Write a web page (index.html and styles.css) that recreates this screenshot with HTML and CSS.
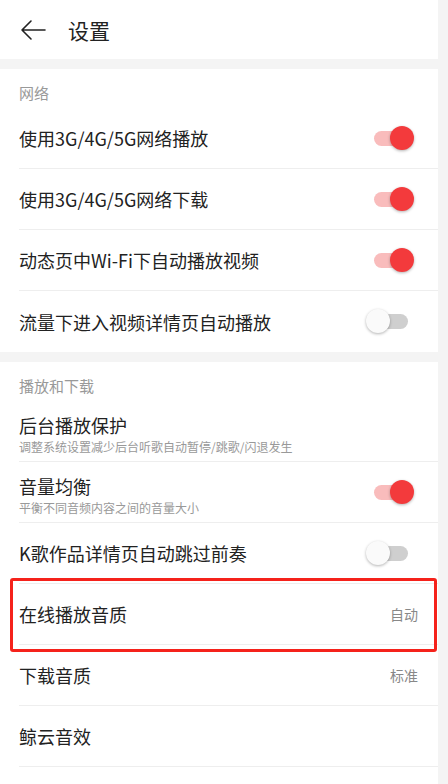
FILE: index.html
```html
<!DOCTYPE html>
<html lang="zh-CN">
<head>
    <meta charset="UTF-8">
    <meta name="viewport" content="width=device-width, initial-scale=1.0">
    <title>设置</title>
    <link rel="stylesheet" href="styles.css">
</head>
<body>
    <div class="page">
        <div class="top-bar">
            <svg class="back-icon" width="28" height="24" viewBox="0 0 28 24">
                <path d="M26 12 H3 M12 3 L3 12 L12 21" fill="none" stroke="#222" stroke-width="1.6" stroke-linecap="round" stroke-linejoin="round"/>
            </svg>
            <div class="title">设置</div>
        </div>

        <div class="section">
            <div class="section-label">网络</div>
            <div class="row">
                <div class="row-title">使用3G/4G/5G网络播放</div>
                <div class="switch on"><span class="knob"></span></div>
            </div>
            <div class="row">
                <div class="row-title">使用3G/4G/5G网络下载</div>
                <div class="switch on"><span class="knob"></span></div>
            </div>
            <div class="row">
                <div class="row-title">动态页中Wi-Fi下自动播放视频</div>
                <div class="switch on"><span class="knob"></span></div>
            </div>
            <div class="row last">
                <div class="row-title">流量下进入视频详情页自动播放</div>
                <div class="switch"><span class="knob"></span></div>
            </div>
        </div>

        <div class="section">
            <div class="section-label">播放和下载</div>
            <div class="row double">
                <div class="row-text">
                    <div class="row-title">后台播放保护</div>
                    <div class="row-sub">调整系统设置减少后台听歌自动暂停/跳歌/闪退发生</div>
                </div>
            </div>
            <div class="row double">
                <div class="row-text">
                    <div class="row-title">音量均衡</div>
                    <div class="row-sub">平衡不同音频内容之间的音量大小</div>
                </div>
                <div class="switch on"><span class="knob"></span></div>
            </div>
            <div class="row">
                <div class="row-title">K歌作品详情页自动跳过前奏</div>
                <div class="switch"><span class="knob"></span></div>
            </div>
            <div class="row marked">
                <div class="row-title">在线播放音质</div>
                <div class="row-value">自动</div>
                <div class="highlight"></div>
            </div>
            <div class="row">
                <div class="row-title">下载音质</div>
                <div class="row-value">标准</div>
            </div>
            <div class="row">
                <div class="row-title">鲸云音效</div>
            </div>
            <div class="row">
                <div class="row-title"></div>
            </div>
        </div>
    </div>
</body>
</html>
```

FILE: styles.css
```css
body {
    margin: 0;
    background-color: #f4f4f4;
    font-family: "Noto Sans CJK SC", "Noto Sans", sans-serif;
    color: #222;
    overflow: hidden;
}

.page {
    width: 438px;
}

.top-bar {
    height: 59px;
    background-color: #fff;
    display: flex;
    align-items: center;
    margin-bottom: 10px;
}

.back-icon {
    margin-left: 19px;
    display: block;
}

.title {
    margin-left: 21px;
    font-size: 21px;
    line-height: 28px;
}

.section {
    background-color: #fff;
    margin-bottom: 10px;
}

.section-label {
    height: 39px;
    box-sizing: border-box;
    padding: 14px 0 0 19px;
    font-size: 15px;
    line-height: 20px;
    color: #999;
}

.row {
    position: relative;
    height: 61px;
    box-sizing: border-box;
    margin-left: 19px;
    padding-right: 20px;
    border-bottom: 1px solid #eeeeee;
    display: flex;
    align-items: center;
    justify-content: space-between;
}

.row.last {
    border-bottom: none;
}

.row.double {
    padding-top: 6px;
}

.row-title {
    font-size: 18px;
    line-height: 22px;
}

.row-sub {
    font-size: 12px;
    line-height: 17px;
    color: #999;
    margin-top: 2px;
}

.row-value {
    font-size: 14px;
    color: #888;
}

.double .switch {
    margin-top: -6px;
}

/* toggle switch */
.switch {
    position: relative;
    width: 34px;
    height: 15px;
    border-radius: 8px;
    background-color: #cfcfcf;
    margin-right: 10px;
}

.switch.on {
    background-color: #f9bcbc;
}

.knob {
    position: absolute;
    top: -5px;
    left: -8px;
    width: 24px;
    height: 24px;
    border-radius: 50%;
    background-color: #fafafa;
    box-shadow: 0 1px 3px rgba(0, 0, 0, 0.3);
}

.switch.on .knob {
    left: 16px;
    background-color: #f33a3c;
}

/* red annotation frame */
.highlight {
    position: absolute;
    top: -6px;
    bottom: -8px;
    left: -9px;
    right: 1px;
    border: 3px solid #f5221b;
    border-radius: 3px;
}
```
